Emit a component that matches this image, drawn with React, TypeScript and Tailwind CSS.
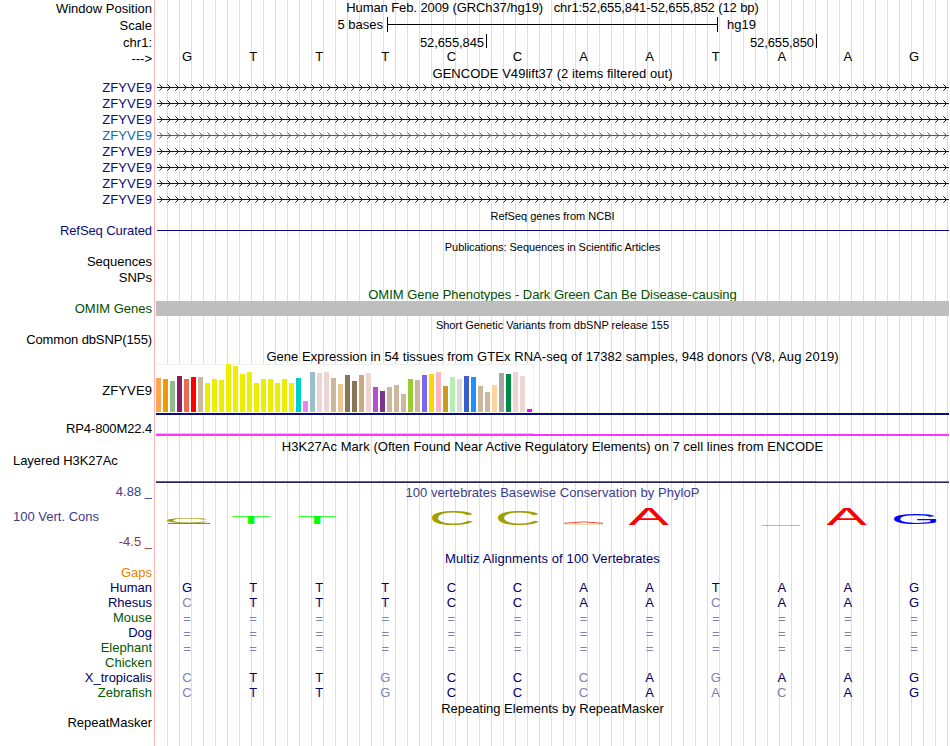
import React from "react";
import clsx from "clsx";

const BASES = "GTTTCCAATAAG";

const GENES = ["navy", "navy", "navy", "teal", "navy", "navy", "navy", "navy"];

// GTEx V8 tissues, [bar height, colour]
const TISSUES: [number, string][] = [
  [34, "#ffa54f"], [33, "#ee9a00"], [31, "#8fbc8f"], [36, "#8b1c62"], [33, "#ee6a50"],
  [35, "#ff0000"], [35, "#cdb79e"], [29, "#eeee00"], [33, "#eeee00"], [32, "#eeee00"],
  [48, "#eeee00"], [46, "#eeee00"], [38, "#eeee00"], [40, "#eeee00"], [29, "#eeee00"],
  [33, "#eeee00"], [33, "#eeee00"], [29, "#eeee00"], [33, "#eeee00"], [29, "#eeee00"],
  [34, "#00cdcd"], [11, "#ee82ee"], [40, "#9ac0cd"], [39, "#eed5d2"], [40, "#eed5d2"],
  [34, "#cdb79e"], [28, "#eec591"], [37, "#8b7355"], [31, "#8b7355"], [37, "#cdaa7d"],
  [39, "#eed5d2"], [25, "#b452cd"], [21, "#7a378b"], [25, "#cdb79e"], [27, "#cdb79e"],
  [18, "#cdb79e"], [33, "#9acd32"], [32, "#cdb79e"], [37, "#7a67ee"], [38, "#ffd700"],
  [40, "#ffb6c1"], [26, "#cd9b1d"], [35, "#b4eeb4"], [33, "#d9d9d9"], [36, "#3a5fcd"],
  [35, "#1e90ff"], [26, "#cdb79e"], [20, "#cdb79e"], [27, "#ffd39b"], [39, "#a6a6a6"],
  [38, "#008b45"], [40, "#eed5d2"], [36, "#eed5d2"], [3, "#ff00ff"],
];

const SPECIES = [
  { name: "Human", color: "text-[#000064]", seq: "GTTTCCAATAAG" },
  { name: "Rhesus", color: "text-[#000064]", seq: "CTTTCCAACAAG" },
  { name: "Mouse", color: "text-[#005a00]", seq: "============" },
  { name: "Dog", color: "text-[#000064]", seq: "============" },
  { name: "Elephant", color: "text-[#005a00]", seq: "============" },
  { name: "Chicken", color: "text-[#005a00]", seq: "" },
  { name: "X_tropicalis", color: "text-[#000064]", seq: "CTTGCCCAGAAG" },
  { name: "Zebrafish", color: "text-[#005a00]", seq: "CTTGCCCAACAG" },
];

// glyph boxes at font-size 100: left, width, descent, height
const GLYPHS: Record<string, [number, number, number, number]> = {
  A: [0, 66.7, 0, 68.8],
  C: [5, 63.5, 1, 70.8],
  G: [5, 67, 1, 70.8],
  T: [2, 57, 0, 68.8],
};

interface LogoLetter {
  base: string;
  x: number;
  y: number;
  w: number;
  h: number;
  fill: string;
}

// coordinates relative to the conservation plot
const LOGO: LogoLetter[] = [
  { base: "C", x: 11, y: 17, w: 41, h: 5.5, fill: "#a0a000" },
  { base: "T", x: 76, y: 15, w: 38, h: 8, fill: "#00ff00" },
  { base: "T", x: 142, y: 16, w: 38, h: 7, fill: "#00ff00" },
  { base: "C", x: 276, y: 9.7, w: 41, h: 14.3, fill: "#a0a000" },
  { base: "C", x: 342, y: 9.7, w: 41, h: 14.3, fill: "#a0a000" },
  { base: "A", x: 472.5, y: 7, w: 40.5, h: 17, fill: "#ff0000" },
  { base: "A", x: 670.5, y: 7, w: 40.5, h: 17, fill: "#ff0000" },
  { base: "G", x: 738, y: 13, w: 43, h: 10, fill: "#0000ff" },
];

interface RowProps {
  label?: React.ReactNode;
  labelClass?: string;
  height: string;
  className?: string;
  children?: React.ReactNode;
}

function Row({ label, labelClass, height, className, children }: RowProps) {
  return (
    <div className={clsx("flex w-[949px] shrink-0", height)}>
      <div className={clsx("w-[154px] shrink-0 whitespace-pre pr-[2px] text-right", labelClass)}>{label}</div>
      <div className="w-[2px] shrink-0 border-l border-[#ffb4b4]" />
      <div
        className={clsx(
          "w-[793px] shrink-0 bg-[linear-gradient(to_right,transparent_11px,#dcdcfa_11px)] bg-[length:12px_100%]",
          className
        )}
      >
        {children}
      </div>
    </div>
  );
}

function Title({ height, className, children }: { height: string; className?: string; children: React.ReactNode }) {
  return (
    <Row height={height} className={clsx("whitespace-pre text-center", className)}>
      {children}
    </Row>
  );
}

function Bases({ seq, faded }: { seq: string; faded?: boolean }) {
  return (
    <div className="grid grid-cols-12">
      {seq.split("").map((b, i) => (
        <span
          key={i}
          className={clsx("pr-1 text-center", faded && b !== BASES[i] && "text-[#8080b4]", b === "=" && "pt-px")}
        >
          {b}
        </span>
      ))}
    </div>
  );
}

function Intron({ id, color }: { id: string; color: string }) {
  return (
    <svg width="793" height="16" className={color} shapeRendering="crispEdges">
      <defs>
        <pattern id={id} x="3" y="0" width="8" height="16" patternUnits="userSpaceOnUse">
          <path d="M1 5h1v1h-1zM2 6h1v1h-1zM3 7h1v1h-1zM2 8h1v1h-1zM1 9h1v1h-1z" fill="currentColor" />
          <path d="M0 4h1v1h-1zM0 10h1v1h-1z" fill="currentColor" opacity="0.55" />
        </pattern>
      </defs>
      <rect x="3" width="790" height="16" fill={`url(#${id})`} />
      <rect x="1" y="7" width="792" height="1" fill="currentColor" />
    </svg>
  );
}

function Letter({ base, x, y, w, h, fill }: LogoLetter) {
  const [left, gw, descent, gh] = GLYPHS[base];
  const sx = w / gw;
  const sy = h / gh;
  return (
    <text
      transform={`translate(${x - left * sx} ${y + h - descent * sy}) scale(${sx} ${sy})`}
      fontSize="100"
      fill={fill}
    >
      {base}
    </text>
  );
}

export default function App() {
  return (
    <div className="flex h-[746px] w-[950px] flex-col overflow-hidden bg-white font-['Liberation_Sans',Arial,sans-serif] text-[13px] leading-4 text-black">
      {/* Position header */}
      <Row
        height="h-[17px]"
        label="Window Position"
        labelClass="pt-px"
        className="whitespace-pre text-center tracking-[-0.09px]"
      >
        {"Human Feb. 2009 (GRCh37/hg19)   chr1:52,655,841-52,655,852 (12 bp)"}
      </Row>
      <Row height="h-[17px]" label="Scale" labelClass="pt-px" className="flex">
        <span className="w-[227px] text-right">5 bases</span>
        <div className="ml-1 flex h-[15px] w-[331px] items-center border-x border-black">
          <div className="h-px w-full bg-black" />
        </div>
        <span className="ml-[9px]">hg19</span>
      </Row>
      <Row height="h-4" label="chr1:" labelClass="pt-px" className="flex tracking-[-0.1px]">
        <span className="h-[14px] w-[331px] border-r border-black pr-[2px] pt-px text-right">52,655,845</span>
        <span className="h-[14px] w-[330px] border-r border-black pr-[2px] pt-px text-right">52,655,850</span>
      </Row>
      <Row height="h-4" label="--->" labelClass="pt-px" className="leading-[14px]">
        <Bases seq={BASES} />
      </Row>

      <Title height="h-[14px]" className="tracking-[0.04px]">GENCODE V49lift37 (2 items filtered out)</Title>
      {GENES.map((g, i) => {
        const color = g === "teal" ? "text-[#0c6eaa]" : "text-[#0c0c78]";
        return (
          <Row key={i} height="h-4" label="ZFYVE9" labelClass={clsx("tracking-[0.1px]", color)}>
            <Intron id={`intron-${i}`} color={color} />
          </Row>
        );
      })}

      <Title height="h-[15px]" className="text-[11px]">RefSeq genes from NCBI</Title>
      <Row height="h-4" label="RefSeq Curated" labelClass="text-[#0c0c78] tracking-[-0.08px]" className="pl-px pt-[7px]">
        <div className="h-px bg-[#0c0c78]" />
      </Row>

      <Title height="h-[15px]" className="text-[11px] tracking-[-0.05px]">Publications: Sequences in Scientific Articles</Title>
      <Row height="h-4" label="Sequences" />
      <Row height="h-4" label="SNPs" />

      <Title height="h-[15px]" className="overflow-hidden pt-px text-[#005000]">
        OMIM Gene Phenotypes - Dark Green Can Be Disease-causing
      </Title>
      <Row height="h-4" label="OMIM Genes" labelClass="text-[#005000]">
        <div className="h-[15px] bg-[#bebebe]" />
      </Row>

      <Title height="h-[15px]" className="text-[11px]">Short Genetic Variants from dbSNP release 155</Title>
      <Row height="h-4" label="Common dbSNP(155)" labelClass="tracking-[-0.12px]" />

      {/* GTEx expression */}
      <Title height="h-4" className="pt-px tracking-[0.055px]">
        Gene Expression in 54 tissues from GTEx RNA-seq of 17382 samples, 948 donors (V8, Aug 2019)
      </Title>
      <Row height="h-[56px]" label="ZFYVE9" labelClass="pt-[19px] tracking-[0.1px]">
        <div className="flex h-[49px] w-[378px] items-end gap-[2px] border-r border-t border-[#f0f0f0] bg-white">
          {TISSUES.map(([h, color], i) => (
            <div key={i} className="mb-px w-[5px] shrink-0" style={{ height: h, backgroundColor: color }} />
          ))}
        </div>
        <div className="h-[2px] bg-[#0c0c78]" />
      </Row>
      <Row height="h-[18px]" label="RP4-800M22.4" labelClass="pt-px tracking-[-0.12px]" className="pt-[13px]">
        <div className="h-px w-[378px] bg-[#d2d2d2]" />
        <div className="h-[2px] bg-[#ff32ff]" />
      </Row>

      <Title height="h-4" className="pt-px tracking-[0.045px]">
        H3K27Ac Mark (Often Found Near Active Regulatory Elements) on 7 cell lines from ENCODE
      </Title>
      <Row
        height="h-[31px]"
        label="Layered H3K27Ac"
        labelClass="-mt-px pl-[13px] !text-left tracking-[-0.05px]"
        className="pt-[27px]"
      >
        <div className="flex h-px">
          <div className="w-[661px] bg-[#6e5a6e]" />
          <div className="flex-1 bg-[#6e6eff]" />
        </div>
        <div className="h-px bg-[#28285a]" />
      </Row>

      {/* Conservation */}
      <Row
        height="h-[66px]"
        labelClass="text-[#3c3c8c]"
        label={
          <div className="-mt-px flex flex-col gap-[9px]">
            <span>4.88 _</span>
            <span className="pl-[13px] text-left">100 Vert. Cons</span>
            <span className="text-[#8c3c3c]">-4.5 _</span>
          </div>
        }
      >
        <div className="text-center tracking-[0.04px] text-[#3c3c8c]">100 vertebrates Basewise Conservation by PhyloP</div>
        <svg width="793" height="50">
          {LOGO.map((l, i) => (
            <Letter key={i} {...l} />
          ))}
          <rect x="12" y="22" width="42" height="1" fill="#6e6ee6" />
          {/* near-zero scores collapse to slivers */}
          <path d="M408 22.3Q428 19.4 447 22.3" fill="none" stroke="#ff0000" strokeWidth="0.9" opacity="0.8" />
          <path d="M409 22.8Q428 24 447 22.8" fill="none" stroke="#a0a000" strokeWidth="0.7" opacity="0.6" />
          <rect x="606" y="24" width="38" height="1" fill="#ff0000" opacity="0.4" />
        </svg>
      </Row>

      <Title height="h-[14px]" className="tracking-[0.11px] text-[#000064]">Multiz Alignments of 100 Vertebrates</Title>
      <Row height="h-[15px]" label="Gaps" labelClass="text-[#e68200]" />
      {SPECIES.map((s) => (
        <Row key={s.name} height="h-[15px]" label={s.name} labelClass={s.color} className="text-[#000064]">
          <Bases seq={s.seq} faded />
        </Row>
      ))}

      <Title height="h-[15px]" className="pt-px">Repeating Elements by RepeatMasker</Title>
      <Row height="h-[31px]" label="RepeatMasker" />
    </div>
  );
}
